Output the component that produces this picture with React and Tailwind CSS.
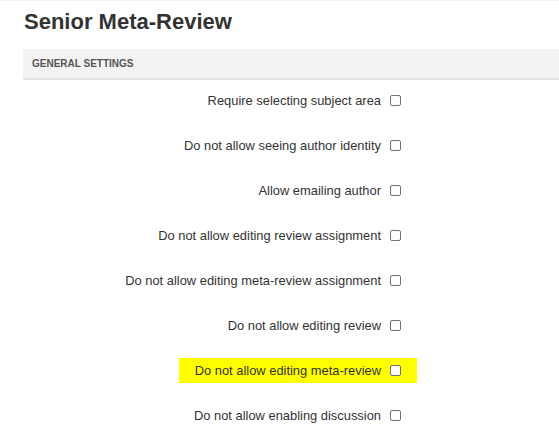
import React from 'react'

const OPTIONS = [
  { label: 'Require selecting subject area' },
  { label: 'Do not allow seeing author identity' },
  { label: 'Allow emailing author' },
  { label: 'Do not allow editing review assignment' },
  { label: 'Do not allow editing meta-review assignment' },
  { label: 'Do not allow editing review' },
  { label: 'Do not allow editing meta-review', highlight: true },
  { label: 'Do not allow enabling discussion' },
]

function Checkbox() {
  return <span className="block w-[11px] h-[11px] border border-[#707070] rounded-[2px] bg-white" />
}

function OptionRow({ label, highlight }) {
  return (
    <div className="w-[417px] flex justify-end">
      <label
        className={`h-[25px] flex items-center gap-[9px] pl-[16px] pr-[16px] ${highlight ? 'bg-[#ffff00]' : ''}`}
      >
        <span className="text-[12.9px] text-[#333]">{label}</span>
        <Checkbox />
      </label>
    </div>
  )
}

export default function App() {
  return (
    <div className="w-[559px] h-[435px] overflow-hidden bg-white border-t border-[#f2f2f2] font-['Liberation_Sans',Arial,sans-serif]">
      <h1 className="pl-[24px] pt-[6px] text-[22px] leading-[30px] font-bold text-[#333]">Senior Meta-Review</h1>
      <div className="ml-[23px] mt-[12px] h-[31px] bg-[#f3f3f3] border-b-2 border-[#e2e2e2] flex items-center pl-[9px]">
        <span className="text-[10px] font-bold text-[#555]">GENERAL SETTINGS</span>
      </div>
      <div className="flex flex-col gap-5 pt-[8px]">
        {OPTIONS.map(o => (
          <OptionRow key={o.label} {...o} />
        ))}
      </div>
    </div>
  )
}
